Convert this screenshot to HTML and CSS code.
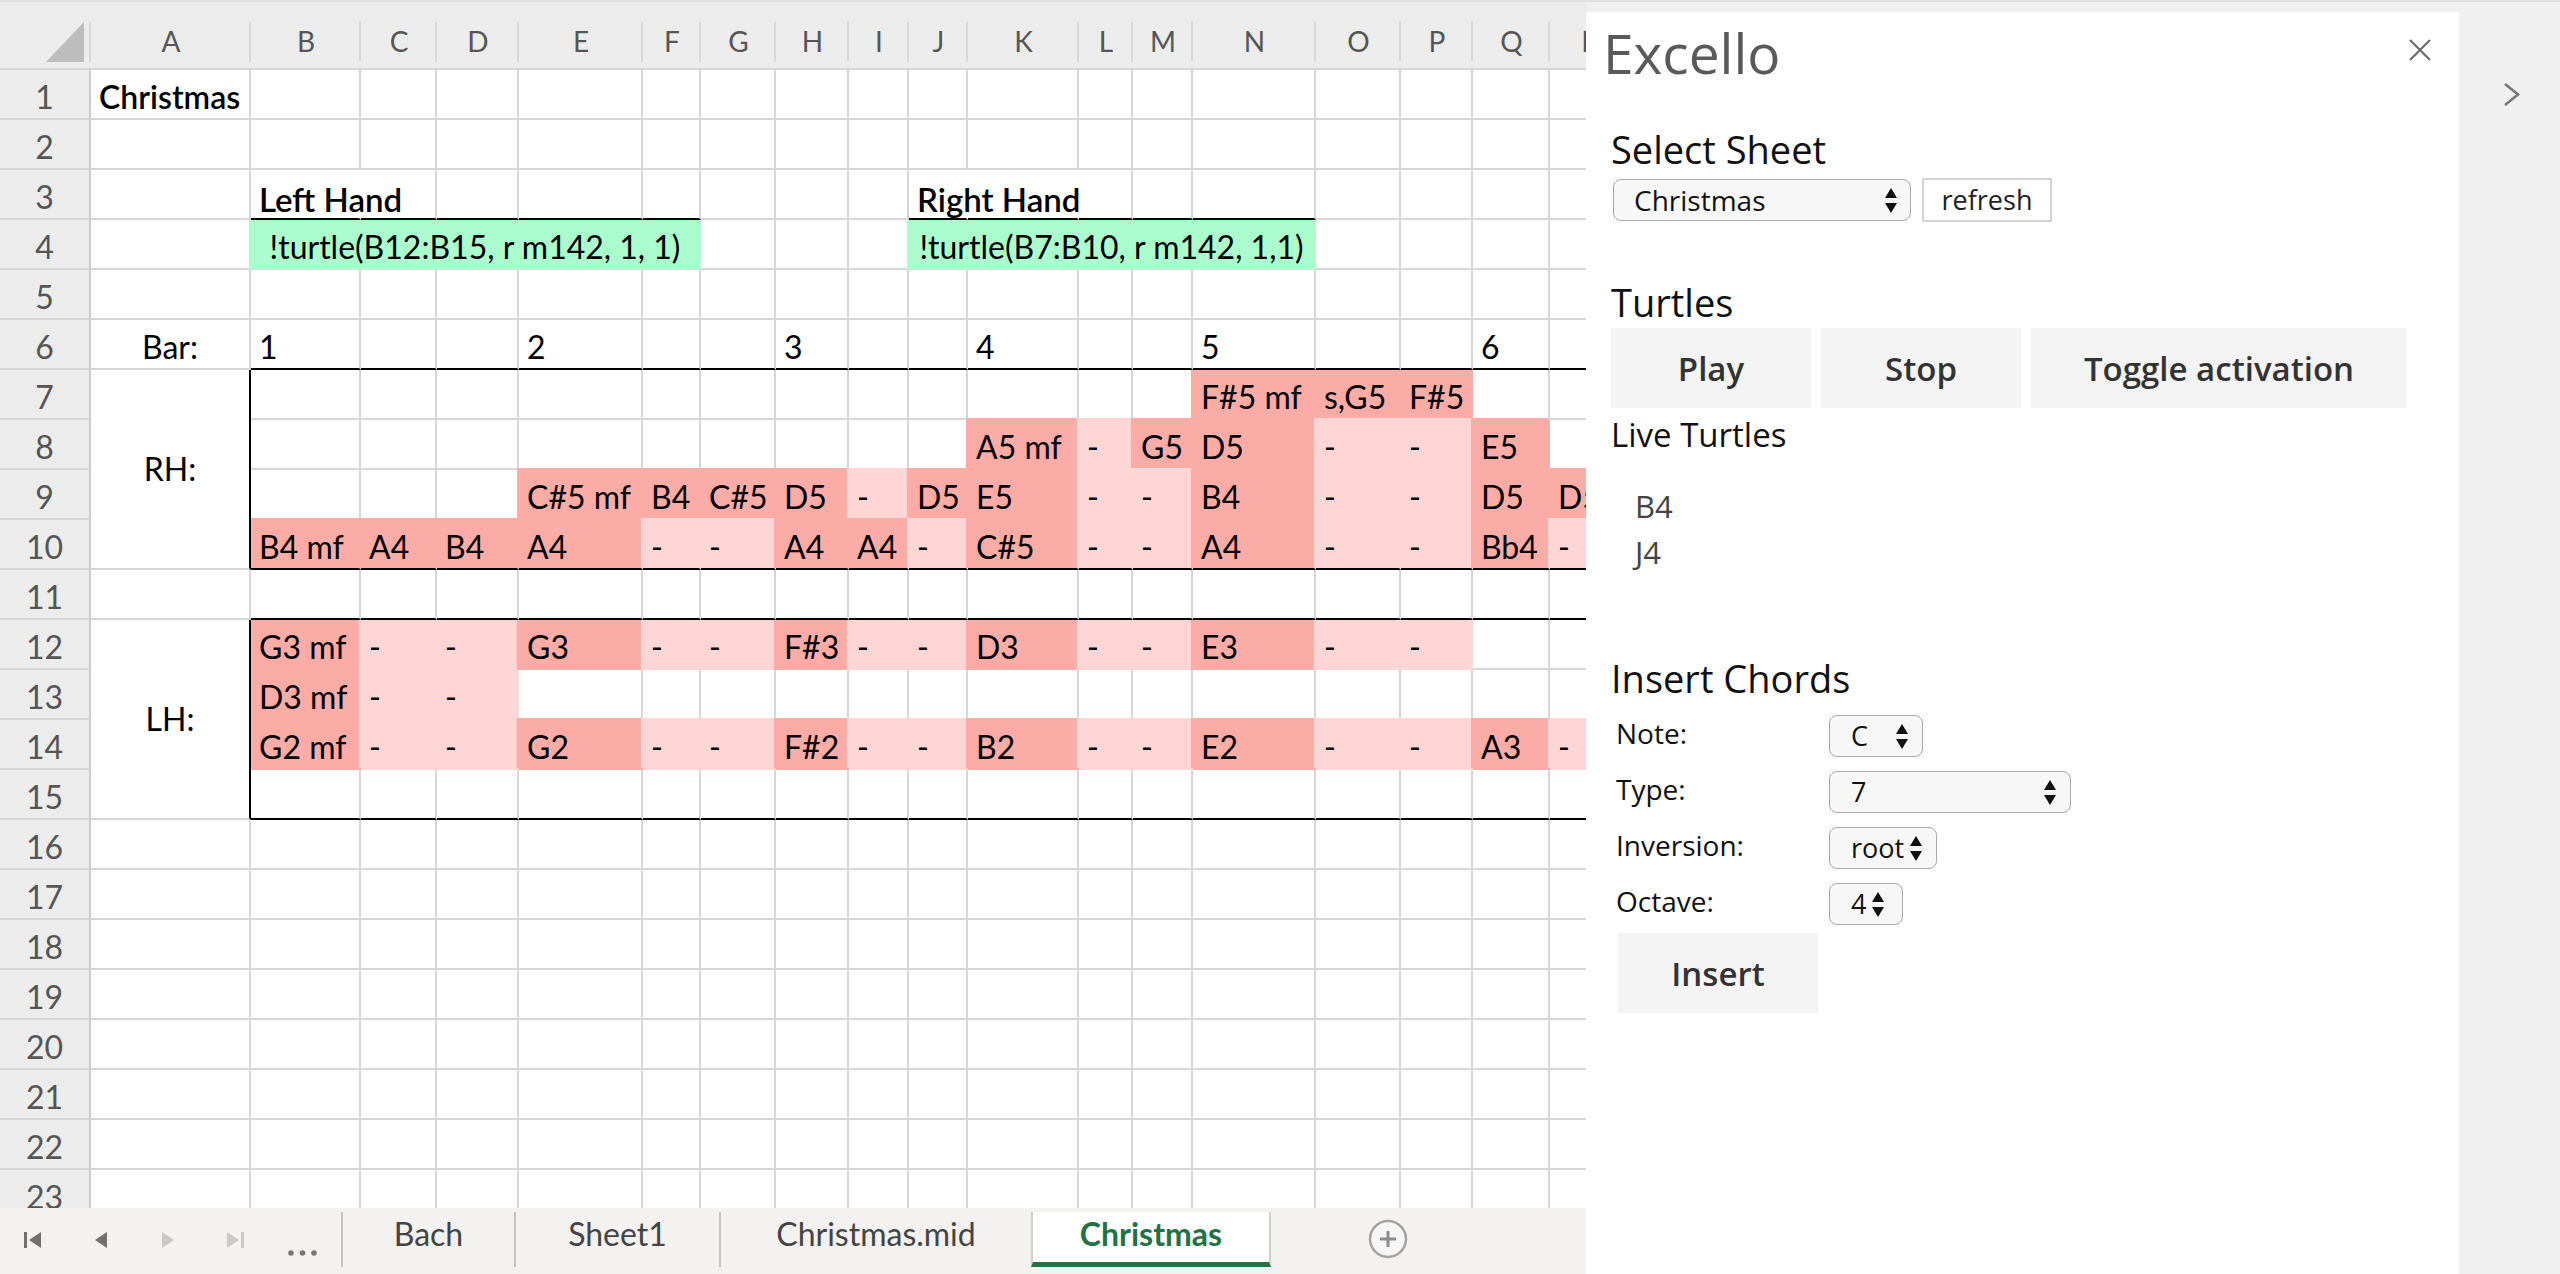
FILE: index.html
```html
<!DOCTYPE html>
<html lang="en">
<head>
<meta charset="utf-8">
<title>Excello</title>
<link rel="stylesheet" href="styles.css">
</head>
<body>
<div class="sheetwrap">
  <div class="sheet">
    <div class="corner"><svg width="38" height="40" viewBox="0 0 38 40"><polygon points="38,0 0,40 38,40" fill="#bdbdbd"/></svg></div>
    <div class="ch">A</div><div class="ch">B</div><div class="ch">C</div><div class="ch">D</div><div class="ch">E</div><div class="ch">F</div>
    <div class="ch">G</div><div class="ch">H</div><div class="ch">I</div><div class="ch">J</div><div class="ch">K</div><div class="ch">L</div>
    <div class="ch">M</div><div class="ch">N</div><div class="ch">O</div><div class="ch">P</div><div class="ch">Q</div><div class="ch">R</div>

    <div class="rh">1</div>
    <div class="c b">Christmas</div><div class="c"></div><div class="c"></div><div class="c"></div><div class="c"></div><div class="c"></div>
    <div class="c"></div><div class="c"></div><div class="c"></div><div class="c"></div><div class="c"></div><div class="c"></div>
    <div class="c"></div><div class="c"></div><div class="c"></div><div class="c"></div><div class="c"></div><div class="c"></div>

    <div class="rh">2</div>
    <div class="c"></div><div class="c"></div><div class="c"></div><div class="c"></div><div class="c"></div><div class="c"></div>
    <div class="c"></div><div class="c"></div><div class="c"></div><div class="c"></div><div class="c"></div><div class="c"></div>
    <div class="c"></div><div class="c"></div><div class="c"></div><div class="c"></div><div class="c"></div><div class="c"></div>

    <div class="rh">3</div>
    <div class="c"></div><div class="c bb hand nr">Left Hand</div><div class="c bb"></div><div class="c bb"></div><div class="c bb"></div><div class="c bb"></div>
    <div class="c"></div><div class="c"></div><div class="c"></div><div class="c bb hand nr">Right Hand</div><div class="c bb nr"></div><div class="c bb"></div>
    <div class="c bb"></div><div class="c bb"></div><div class="c"></div><div class="c"></div><div class="c"></div><div class="c"></div>

    <div class="rh">4</div>
    <div class="c"></div><div class="c g s5">!turtle(B12:B15, r m142, 1, 1)</div>
    <div class="c"></div><div class="c"></div><div class="c"></div><div class="c g s5">!turtle(B7:B10, r m142, 1,1)</div>
    <div class="c"></div><div class="c"></div><div class="c"></div><div class="c"></div>

    <div class="rh">5</div>
    <div class="c"></div><div class="c"></div><div class="c"></div><div class="c"></div><div class="c"></div><div class="c"></div>
    <div class="c"></div><div class="c"></div><div class="c"></div><div class="c"></div><div class="c"></div><div class="c"></div>
    <div class="c"></div><div class="c"></div><div class="c"></div><div class="c"></div><div class="c"></div><div class="c"></div>

    <div class="rh">6</div>
    <div class="c ctr">Bar:</div><div class="c bb">1</div><div class="c bb"></div><div class="c bb"></div><div class="c bb">2</div><div class="c bb"></div>
    <div class="c bb"></div><div class="c bb">3</div><div class="c bb"></div><div class="c bb"></div><div class="c bb">4</div><div class="c bb"></div>
    <div class="c bb"></div><div class="c bb">5</div><div class="c bb"></div><div class="c bb"></div><div class="c bb">6</div><div class="c bb"></div>

    <div class="rh">7</div>
    <div class="c mid rb s4">RH:</div><div class="c"></div><div class="c"></div><div class="c"></div><div class="c"></div><div class="c"></div>
    <div class="c"></div><div class="c"></div><div class="c"></div><div class="c"></div><div class="c"></div><div class="c"></div>
    <div class="c"></div><div class="c f d nt">F#5 mf</div><div class="c f d nt">s,G5</div><div class="c f d nt">F#5</div><div class="c"></div><div class="c"></div>

    <div class="rh">8</div>
    <div class="c"></div><div class="c"></div><div class="c"></div><div class="c"></div><div class="c"></div>
    <div class="c"></div><div class="c"></div><div class="c"></div><div class="c"></div><div class="c f d">A5 mf</div><div class="c f l">-</div>
    <div class="c f d">G5</div><div class="c f d">D5</div><div class="c f l">-</div><div class="c f l">-</div><div class="c f d">E5</div><div class="c"></div>

    <div class="rh">9</div>
    <div class="c"></div><div class="c"></div><div class="c"></div><div class="c f d">C#5 mf</div><div class="c f d">B4</div>
    <div class="c f d">C#5</div><div class="c f d">D5</div><div class="c f l">-</div><div class="c f d">D5</div><div class="c f d">E5</div><div class="c f l">-</div>
    <div class="c f l">-</div><div class="c f d">B4</div><div class="c f l">-</div><div class="c f l">-</div><div class="c f d">D5</div><div class="c f d">D5</div>

    <div class="rh">10</div>
    <div class="c f d nl bb">B4 mf</div><div class="c f d bb">A4</div><div class="c f d bb">B4</div><div class="c f d bb">A4</div><div class="c f l bb">-</div>
    <div class="c f l bb">-</div><div class="c f d bb">A4</div><div class="c f d bb">A4</div><div class="c f l bb">-</div><div class="c f d bb">C#5</div><div class="c f l bb">-</div>
    <div class="c f l bb">-</div><div class="c f d bb">A4</div><div class="c f l bb">-</div><div class="c f l bb">-</div><div class="c f d bb">Bb4</div><div class="c f l bb">-</div>

    <div class="rh">11</div>
    <div class="c"></div><div class="c bb"></div><div class="c bb"></div><div class="c bb"></div><div class="c bb"></div><div class="c bb"></div>
    <div class="c bb"></div><div class="c bb"></div><div class="c bb"></div><div class="c bb"></div><div class="c bb"></div><div class="c bb"></div>
    <div class="c bb"></div><div class="c bb"></div><div class="c bb"></div><div class="c bb"></div><div class="c bb"></div><div class="c bb"></div>

    <div class="rh">12</div>
    <div class="c mid rb s4">LH:</div><div class="c f d nn">G3 mf</div><div class="c f l nt">-</div><div class="c f l nt">-</div><div class="c f d nt">G3</div><div class="c f l nt">-</div>
    <div class="c f l nt">-</div><div class="c f d nt">F#3</div><div class="c f l nt">-</div><div class="c f l nt">-</div><div class="c f d nt">D3</div><div class="c f l nt">-</div>
    <div class="c f l nt">-</div><div class="c f d nt">E3</div><div class="c f l nt">-</div><div class="c f l nt">-</div><div class="c"></div><div class="c"></div>

    <div class="rh">13</div>
    <div class="c f d nl">D3 mf</div><div class="c f l">-</div><div class="c f l">-</div><div class="c"></div><div class="c"></div>
    <div class="c"></div><div class="c"></div><div class="c"></div><div class="c"></div><div class="c"></div><div class="c"></div>
    <div class="c"></div><div class="c"></div><div class="c"></div><div class="c"></div><div class="c"></div><div class="c"></div>

    <div class="rh">14</div>
    <div class="c f d nl">G2 mf</div><div class="c f l">-</div><div class="c f l">-</div><div class="c f d">G2</div><div class="c f l">-</div>
    <div class="c f l">-</div><div class="c f d">F#2</div><div class="c f l">-</div><div class="c f l">-</div><div class="c f d">B2</div><div class="c f l">-</div>
    <div class="c f l">-</div><div class="c f d">E2</div><div class="c f l">-</div><div class="c f l">-</div><div class="c f d">A3</div><div class="c f l">-</div>

    <div class="rh">15</div>
    <div class="c bb"></div><div class="c bb"></div><div class="c bb"></div><div class="c bb"></div><div class="c bb"></div>
    <div class="c bb"></div><div class="c bb"></div><div class="c bb"></div><div class="c bb"></div><div class="c bb"></div><div class="c bb"></div>
    <div class="c bb"></div><div class="c bb"></div><div class="c bb"></div><div class="c bb"></div><div class="c bb"></div><div class="c bb"></div>

    <div class="rh">16</div>
    <div class="c"></div><div class="c"></div><div class="c"></div><div class="c"></div><div class="c"></div><div class="c"></div>
    <div class="c"></div><div class="c"></div><div class="c"></div><div class="c"></div><div class="c"></div><div class="c"></div>
    <div class="c"></div><div class="c"></div><div class="c"></div><div class="c"></div><div class="c"></div><div class="c"></div>

    <div class="rh">17</div>
    <div class="c"></div><div class="c"></div><div class="c"></div><div class="c"></div><div class="c"></div><div class="c"></div>
    <div class="c"></div><div class="c"></div><div class="c"></div><div class="c"></div><div class="c"></div><div class="c"></div>
    <div class="c"></div><div class="c"></div><div class="c"></div><div class="c"></div><div class="c"></div><div class="c"></div>

    <div class="rh">18</div>
    <div class="c"></div><div class="c"></div><div class="c"></div><div class="c"></div><div class="c"></div><div class="c"></div>
    <div class="c"></div><div class="c"></div><div class="c"></div><div class="c"></div><div class="c"></div><div class="c"></div>
    <div class="c"></div><div class="c"></div><div class="c"></div><div class="c"></div><div class="c"></div><div class="c"></div>

    <div class="rh">19</div>
    <div class="c"></div><div class="c"></div><div class="c"></div><div class="c"></div><div class="c"></div><div class="c"></div>
    <div class="c"></div><div class="c"></div><div class="c"></div><div class="c"></div><div class="c"></div><div class="c"></div>
    <div class="c"></div><div class="c"></div><div class="c"></div><div class="c"></div><div class="c"></div><div class="c"></div>

    <div class="rh">20</div>
    <div class="c"></div><div class="c"></div><div class="c"></div><div class="c"></div><div class="c"></div><div class="c"></div>
    <div class="c"></div><div class="c"></div><div class="c"></div><div class="c"></div><div class="c"></div><div class="c"></div>
    <div class="c"></div><div class="c"></div><div class="c"></div><div class="c"></div><div class="c"></div><div class="c"></div>

    <div class="rh">21</div>
    <div class="c"></div><div class="c"></div><div class="c"></div><div class="c"></div><div class="c"></div><div class="c"></div>
    <div class="c"></div><div class="c"></div><div class="c"></div><div class="c"></div><div class="c"></div><div class="c"></div>
    <div class="c"></div><div class="c"></div><div class="c"></div><div class="c"></div><div class="c"></div><div class="c"></div>

    <div class="rh">22</div>
    <div class="c"></div><div class="c"></div><div class="c"></div><div class="c"></div><div class="c"></div><div class="c"></div>
    <div class="c"></div><div class="c"></div><div class="c"></div><div class="c"></div><div class="c"></div><div class="c"></div>
    <div class="c"></div><div class="c"></div><div class="c"></div><div class="c"></div><div class="c"></div><div class="c"></div>

    <div class="rh">23</div>
    <div class="c"></div><div class="c"></div><div class="c"></div><div class="c"></div><div class="c"></div><div class="c"></div>
    <div class="c"></div><div class="c"></div><div class="c"></div><div class="c"></div><div class="c"></div><div class="c"></div>
    <div class="c"></div><div class="c"></div><div class="c"></div><div class="c"></div><div class="c"></div><div class="c"></div>
  </div>

  <div class="tabbar">
    <div class="nav">
      <svg width="341" height="66" viewBox="0 0 341 66">
        <rect x="24" y="24" width="3" height="16" fill="#707070"/>
        <polygon points="41,24 29,32 41,40" fill="#707070"/>
        <polygon points="107,24 95,32 107,40" fill="#707070"/>
        <polygon points="162,24 174,32 162,40" fill="#c9c9c9"/>
        <polygon points="227,24 239,32 227,40" fill="#c9c9c9"/>
        <rect x="241" y="24" width="3" height="16" fill="#c9c9c9"/>
        <circle cx="291" cy="45" r="2.8" fill="#777"/>
        <circle cx="302.5" cy="45" r="2.8" fill="#777"/>
        <circle cx="314" cy="45" r="2.8" fill="#777"/>
      </svg>
    </div>
    <div class="tab t1">Bach</div>
    <div class="tab t2">Sheet1</div>
    <div class="tab t3">Christmas.mid</div>
    <div class="tab active">Christmas</div>
    <div class="add">
      <svg width="40" height="40" viewBox="0 0 40 40">
        <circle cx="20" cy="20" r="18" fill="#f6f6f6" stroke="#a3a3a3" stroke-width="2.5"/>
        <line x1="12" y1="20" x2="28" y2="20" stroke="#8c8c8c" stroke-width="3"/>
        <line x1="20" y1="12" x2="20" y2="28" stroke="#8c8c8c" stroke-width="3"/>
      </svg>
    </div>
  </div>
</div>

<div class="panel">
  <div class="phead">
    <h1 class="title">Excello</h1>
    <svg class="close" width="22" height="22" viewBox="0 0 22 22"><path d="M1 1 L21 21 M21 1 L1 21" stroke="#6b6b6b" stroke-width="2.2" fill="none"/></svg>
  </div>
  <h2 class="sec sec-sheet">Select Sheet</h2>
  <div class="selrow">
    <div class="sel w-sheet"><span>Christmas</span><svg class="arr" width="12" height="25" viewBox="0 0 12 25"><polygon points="6,0 12,10 0,10" fill="#111"/><polygon points="0,15 12,15 6,25" fill="#111"/></svg></div>
    <div class="refresh">refresh</div>
  </div>
  <h2 class="sec sec-turtles">Turtles</h2>
  <div class="btns">
    <div class="btn w-play">Play</div>
    <div class="btn w-stop">Stop</div>
    <div class="btn w-toggle">Toggle activation</div>
  </div>
  <h3 class="live">Live Turtles</h3>
  <ul class="tlist">
    <li>B4</li>
    <li>J4</li>
  </ul>
  <h2 class="sec sec-chords">Insert Chords</h2>
  <div class="form">
    <div class="frow"><span class="lbl">Note:</span><div class="sel fsel w-note"><span>C</span><svg class="arr" width="12" height="25" viewBox="0 0 12 25"><polygon points="6,0 12,10 0,10" fill="#111"/><polygon points="0,15 12,15 6,25" fill="#111"/></svg></div></div>
    <div class="frow"><span class="lbl">Type:</span><div class="sel fsel w-type"><span>7</span><svg class="arr" width="12" height="25" viewBox="0 0 12 25"><polygon points="6,0 12,10 0,10" fill="#111"/><polygon points="0,15 12,15 6,25" fill="#111"/></svg></div></div>
    <div class="frow"><span class="lbl">Inversion:</span><div class="sel fsel w-inv"><span>root</span><svg class="arr" width="12" height="25" viewBox="0 0 12 25"><polygon points="6,0 12,10 0,10" fill="#111"/><polygon points="0,15 12,15 6,25" fill="#111"/></svg></div></div>
    <div class="frow"><span class="lbl">Octave:</span><div class="sel fsel w-oct"><span>4</span><svg class="arr" width="12" height="25" viewBox="0 0 12 25"><polygon points="6,0 12,10 0,10" fill="#111"/><polygon points="0,15 12,15 6,25" fill="#111"/></svg></div></div>
  </div>
  <div class="btn insert">Insert</div>
</div>

<div class="rstrip">
  <svg class="chev" width="19" height="25" viewBox="0 0 19 25"><polyline points="3,2 16,12.5 3,23" fill="none" stroke="#777" stroke-width="2.6"/></svg>
</div>
</body>
</html>
```

FILE: styles.css
```css
* { box-sizing: border-box; margin: 0; padding: 0; }

html, body { width: 2560px; height: 1274px; overflow: hidden; }

body {
  display: flex;
  background: linear-gradient(#e0e0e0 0 2px, #f0f0f0 2px);
  font-family: "Open Sans", "Noto Sans", sans-serif;
}

/* ---------- spreadsheet ---------- */
.sheetwrap {
  width: 1586px;
  height: 1274px;
  display: flex;
  flex-direction: column;
  flex: none;
}

.sheet {
  height: 1208px;
  overflow: hidden;
  background: #fff;
  border-top: 2px solid #e0e0e0;
  display: grid;
  grid-template-columns: 91px 160px 110px 76px 82px 124px 58px 75px 73px 60px 59px 111px 54px 60px 123px 85px 72px 77px 80px;
  grid-template-rows: 68px;
  grid-auto-rows: 50px;
  font-family: Lato, "Open Sans", sans-serif;
  font-size: 32px;
  color: #000;
}

.corner {
  background: linear-gradient(#d8d8d8, #d8d8d8) right 0 top 20px / 2px 40px no-repeat, #ececec;
  border-bottom: 2px solid #d6d6d6;
  padding: 20px 0 0 46px;
}

.ch {
  background: linear-gradient(#d8d8d8, #d8d8d8) right 0 top 20px / 2px 40px no-repeat, #ececec;
  border-bottom: 2px solid #d6d6d6;
  display: flex;
  align-items: center;
  justify-content: center;
  padding-top: 12px;
  font-size: 28px;
  color: #555;
}

.rh {
  background: #ececec;
  border-right: 2px solid #cbcbcb;
  border-bottom: 2px solid #d6d6d6;
  display: flex;
  align-items: flex-end;
  justify-content: center;
  padding-bottom: 2px;
  line-height: 38px;
  color: #555;
}

.c {
  border-right: 2px solid #d6d6d6;
  border-bottom: 2px solid #d6d6d6;
  display: flex;
  align-items: flex-end;
  padding: 0 0 2px 8px;
  line-height: 38px;
  white-space: nowrap;
  min-width: 0;
}

.b { font-weight: 600; }
.hand { font-weight: 600; font-size: 33px; padding-bottom: 0; }
.ctr { justify-content: center; padding-left: 0; }
.mid { align-items: center; justify-content: center; padding: 0; }
.s4 { grid-row: span 4; }
.s5 { grid-column: span 5; }

.g {
  background: #abfdcd;
  border-color: #abfdcd;
  box-shadow: -2px 0 0 #abfdcd;
  justify-content: center;
  padding-left: 0;
}

.d { --f: #fcaca7; }
.l { --f: #fdd6d5; }
.f {
  background: var(--f);
  border-color: var(--f);
  box-shadow: -2px -2px 0 var(--f);
}
.nt { box-shadow: -2px 0 0 var(--f); }
.nl { box-shadow: 0 -2px 0 var(--f); }
.nn { box-shadow: none; }

.nr { border-right-color: transparent; }
.rb { border-right-color: #000; }
.bb { border-bottom-color: #000; }

/* ---------- sheet tabs ---------- */
.tabbar {
  height: 66px;
  background: #f3f2f1;
  display: flex;
  align-items: flex-start;
  font-family: Lato, "Open Sans", sans-serif;
  font-size: 32px;
  color: #444;
  flex: none;
}

.nav { width: 341px; height: 66px; flex: none; }
.nav svg { display: block; }

.tab {
  height: 55px;
  margin-top: 4px;
  border-left: 2px solid #c4c4c4;
  display: flex;
  align-items: center;
  justify-content: center;
  padding-bottom: 12px;
  flex: none;
  white-space: nowrap;
}
.t1 { width: 173px; }
.t2 { width: 205px; }
.t3 { width: 312px; }

.tab.active {
  width: 240px;
  background: #fff;
  border-left: 2px solid #cfcfcf;
  border-right: 2px solid #cfcfcf;
  border-bottom: 5px solid #217346;
  color: #217346;
  font-weight: 700;
  padding-bottom: 8px;
}

.add { margin: 11px 0 0 97px; flex: none; }
.add svg { display: block; }

/* ---------- task pane ---------- */
.panel {
  width: 873px;
  height: 1262px;
  margin-top: 12px;
  background: #fff;
  padding: 0 28px 0 25px;
  flex: none;
  color: #111;
}

.phead {
  display: flex;
  justify-content: space-between;
  align-items: flex-start;
  padding-top: 11px;
}

.title {
  font-size: 55px;
  line-height: 60px;
  font-weight: 400;
  color: #5a5a5a;
  margin-left: -8px;
}

.close { margin-top: 16px; display: block; }

.sec {
  font-size: 38px;
  line-height: 44px;
  font-weight: 400;
  color: #111;
}
.sec-sheet { margin-top: 44px; }
.sec-turtles { margin-top: 58px; }
.sec-chords { margin-top: 81px; }

.selrow {
  display: flex;
  align-items: center;
  gap: 11px;
  height: 44px;
  margin-top: 7px;
  margin-left: 2px;
}

.sel {
  height: 42px;
  border: 1px solid #a9a9a9;
  border-radius: 8px;
  background: #f7f7f7;
  display: flex;
  align-items: center;
  padding: 0 13px 0 20px;
  font-size: 28px;
  color: #111;
  flex: none;
}
.sel span { line-height: 40px; }
.sel .arr { margin-left: auto; display: block; flex: none; }

.w-sheet { width: 298px; }

.refresh {
  width: 130px;
  height: 44px;
  border: 2px solid #d2d2d2;
  background: #fff;
  display: flex;
  align-items: center;
  justify-content: center;
  font-size: 27px;
  color: #222;
  padding-bottom: 2px;
}

.btns {
  display: flex;
  gap: 10px;
  margin-top: 4px;
}

.btn {
  height: 80px;
  background: #f4f4f4;
  display: flex;
  align-items: center;
  justify-content: center;
  font-size: 33px;
  font-weight: 600;
  color: #333;
  white-space: nowrap;
  flex: none;
  padding-top: 1px;
}
.w-play { width: 200px; }
.w-stop { width: 200px; }
.w-toggle { width: 376px; }

.live {
  font-size: 33px;
  line-height: 40px;
  font-weight: 400;
  margin-top: 7px;
  color: #111;
}

.tlist {
  list-style: none;
  margin-top: 28px;
  padding-left: 24px;
  font-size: 31px;
  line-height: 46px;
  color: #444;
}

.form {
  margin-top: 15px;
  margin-left: 5px;
  display: flex;
  flex-direction: column;
  gap: 14px;
}

.frow {
  display: flex;
  align-items: center;
  height: 42px;
}

.lbl {
  width: 213px;
  font-size: 28px;
  line-height: 36px;
  padding-bottom: 6px;
  color: #111;
  flex: none;
}

.fsel { font-size: 27px; padding-left: 21px; padding-right: 14px; }
.w-note { width: 94px; }
.w-type { width: 242px; }
.w-inv { width: 108px; }
.w-oct { width: 74px; }
.w-inv .arr, .w-oct .arr { margin-left: 6px; }

.insert {
  width: 200px;
  margin-top: 8px;
  margin-left: 7px;
}

/* ---------- right strip ---------- */
.rstrip {
  width: 101px;
  height: 1274px;
  flex: none;
  padding: 82px 0 0 43px;
}
.chev { display: block; }
```
